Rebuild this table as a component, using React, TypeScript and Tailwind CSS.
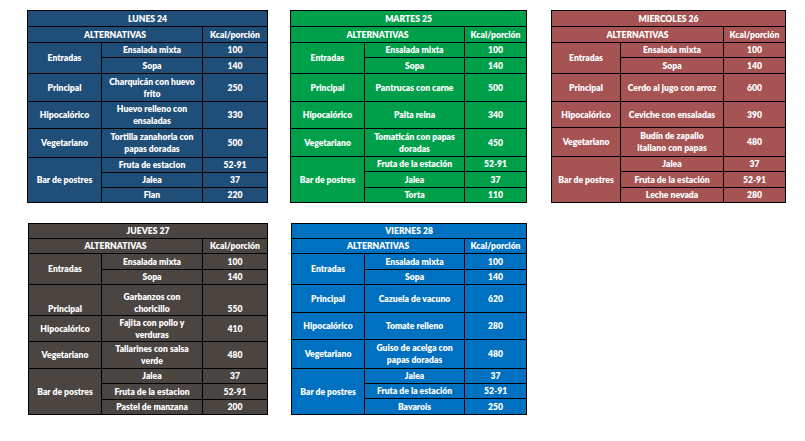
import React from 'react';

type Item = { name: string; kcal: string };
type Group = { label: string; items: Item[]; bottom?: boolean };
type Day = {
  title: string;
  bg: string;
  w: string;
  cols: [string, string, string];
  h: string[];
  groups: Group[];
};

const it = (name: string, kcal: string): Item => ({ name, kcal });

const LUNES: Day = {
  title: 'LUNES 24',
  bg: 'bg-[#1f4e79]',
  w: 'w-[240px]',
  cols: ['w-[74px]', 'w-[101px]', 'w-[65px]'],
  h: ['h-[16px]', 'h-[16px]', 'h-[15px]', 'h-[16px]', 'h-[28px]', 'h-[27px]', 'h-[29px]', 'h-[15px]', 'h-[15px]', 'h-[15px]'],
  groups: [
    { label: 'Entradas', items: [it('Ensalada mixta', '100'), it('Sopa', '140')] },
    { label: 'Principal', items: [it('Charquicán con huevo\nfrito', '250')] },
    { label: 'Hipocalórico', items: [it('Huevo relleno con\nensaladas', '330')] },
    { label: 'Vegetariano', items: [it('Tortilla zanahoria con\npapas doradas', '500')] },
    { label: 'Bar de postres', items: [it('Fruta de estacion', '52-91'), it('Jalea', '37'), it('Flan', '220')] },
  ],
};

const MARTES: Day = {
  title: 'MARTES 25',
  bg: 'bg-[#00a04b]',
  w: 'w-[236px]',
  cols: ['w-[74px]', 'w-[100px]', 'w-[62px]'],
  h: ['h-[16px]', 'h-[16px]', 'h-[15px]', 'h-[16px]', 'h-[28px]', 'h-[27px]', 'h-[28px]', 'h-[15px]', 'h-[16px]', 'h-[15px]'],
  groups: [
    { label: 'Entradas', items: [it('Ensalada mixta', '100'), it('Sopa', '140')] },
    { label: 'Principal', items: [it('Pantrucas con carne', '500')] },
    { label: 'Hipocalórico', items: [it('Palta reina', '340')] },
    { label: 'Vegetariano', items: [it('Tomaticán con papas\ndoradas', '450')] },
    { label: 'Bar de postres', items: [it('Fruta de la estación', '52-91'), it('Jalea', '37'), it('Torta', '110')] },
  ],
};

const MIERCOLES: Day = {
  title: 'MIERCOLES 26',
  bg: 'bg-[#a65353]',
  w: 'w-[234px]',
  cols: ['w-[69px]', 'w-[103px]', 'w-[62px]'],
  h: ['h-[16px]', 'h-[16px]', 'h-[15px]', 'h-[16px]', 'h-[28px]', 'h-[26px]', 'h-[29px]', 'h-[15px]', 'h-[16px]', 'h-[15px]'],
  groups: [
    { label: 'Entradas', items: [it('Ensalada mixta', '100'), it('Sopa', '140')] },
    { label: 'Principal', items: [it('Cerdo al jugo con arroz', '600')] },
    { label: 'Hipocalórico', items: [it('Ceviche con ensaladas', '390')] },
    { label: 'Vegetariano', items: [it('Budín de zapallo\nitaliano con papas', '480')] },
    { label: 'Bar de postres', items: [it('Jalea', '37'), it('Fruta de la estación', '52-91'), it('Leche nevada', '280')] },
  ],
};

const JUEVES: Day = {
  title: 'JUEVES 27',
  bg: 'bg-[#4a4541]',
  w: 'w-[239px]',
  cols: ['w-[73px]', 'w-[101px]', 'w-[65px]'],
  h: ['h-[15px]', 'h-[15px]', 'h-[16px]', 'h-[15px]', 'h-[31px]', 'h-[26px]', 'h-[27px]', 'h-[15px]', 'h-[16px]', 'h-[15px]'],
  groups: [
    { label: 'Entradas', items: [it('Ensalada mixta', '100'), it('Sopa', '140')] },
    { label: 'Principal', items: [it('Garbanzos con\nchoricillo', '550')], bottom: true },
    { label: 'Hipocalórico', items: [it('Fajita con pollo y\nverduras', '410')] },
    { label: 'Vegetariano', items: [it('Tallarines con salsa\nverde', '480')] },
    { label: 'Bar de postres', items: [it('Jalea', '37'), it('Fruta de la estacion', '52-91'), it('Pastel de manzana', '200')] },
  ],
};

const VIERNES: Day = {
  title: 'VIERNES 28',
  bg: 'bg-[#0070c0]',
  w: 'w-[235px]',
  cols: ['w-[73px]', 'w-[100px]', 'w-[62px]'],
  h: ['h-[15px]', 'h-[15px]', 'h-[16px]', 'h-[15px]', 'h-[28px]', 'h-[27px]', 'h-[29px]', 'h-[15px]', 'h-[15px]', 'h-[16px]'],
  groups: [
    { label: 'Entradas', items: [it('Ensalada mixta', '100'), it('Sopa', '140')] },
    { label: 'Principal', items: [it('Cazuela de vacuno', '620')] },
    { label: 'Hipocalórico', items: [it('Tomate relleno', '280')] },
    { label: 'Vegetariano', items: [it('Guiso de acelga con\npapas doradas', '480')] },
    { label: 'Bar de postres', items: [it('Jalea', '37'), it('Fruta de la estación', '52-91'), it('Bavarois', '250')] },
  ],
};

function Lines({ text }: { text: string }) {
  const parts = text.split('\n');
  return (
    <>
      {parts.map((p, i) => (
        <React.Fragment key={i}>
          {i > 0 && <br />}
          {p}
        </React.Fragment>
      ))}
    </>
  );
}

const cell = 'border border-black p-0 text-center';

function MenuTable({ day }: { day: Day }) {
  let row = 2;
  return (
    <table className={`${day.w} ${day.bg} table-fixed border-collapse border border-black text-white font-extrabold text-[8.6px] leading-[12px]`}>
      <colgroup>
        {day.cols.map((c, i) => (
          <col key={i} className={c} />
        ))}
      </colgroup>
      <tbody>
        <tr className={day.h[0]}>
          <td colSpan={3} className={`${cell} align-middle`}>{day.title}</td>
        </tr>
        <tr className={day.h[1]}>
          <td colSpan={2} className={`${cell} align-middle`}>ALTERNATIVAS</td>
          <td className={`${cell} align-middle`}>Kcal/porción</td>
        </tr>
        {day.groups.map((g) =>
          g.items.map((item, i) => {
            const h = day.h[row++];
            const v = g.bottom ? 'align-bottom' : 'align-middle';
            return (
              <tr key={g.label + i} className={h}>
                {i === 0 && (
                  <td rowSpan={g.items.length} className={`${cell} ${v}`}>
                    {g.label}
                  </td>
                )}
                <td className={`${cell} ${v}`}>
                  <Lines text={item.name} />
                </td>
                <td className={`${cell} ${v}`}>{item.kcal}</td>
              </tr>
            );
          })
        )}
      </tbody>
    </table>
  );
}

export default function App() {
  return (
    <div className="w-[805px] h-[441px] bg-white overflow-hidden font-['Lato','Open_Sans',sans-serif]">
      <div className="flex items-start pt-[10px] pl-[27px]">
        <MenuTable day={LUNES} />
        <div className="ml-[22px]">
          <MenuTable day={MARTES} />
        </div>
        <div className="ml-[24px]">
          <MenuTable day={MIERCOLES} />
        </div>
      </div>
      <div className="flex items-start mt-[20px] pl-[28px]">
        <MenuTable day={JUEVES} />
        <div className="ml-[23px]">
          <MenuTable day={VIERNES} />
        </div>
      </div>
    </div>
  );
}
